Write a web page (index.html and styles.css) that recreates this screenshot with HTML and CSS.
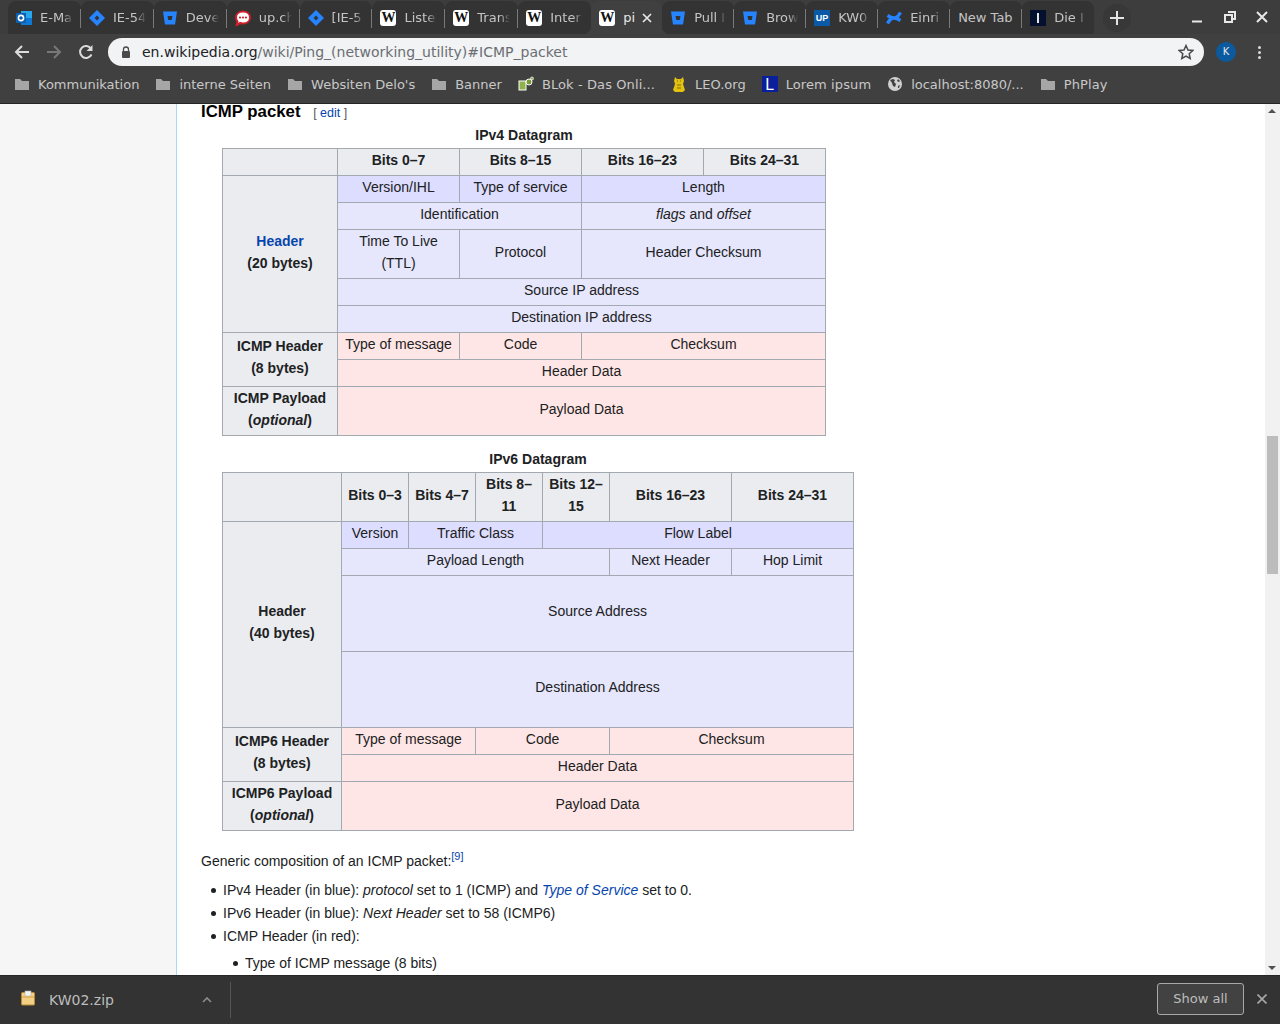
FILE: index.html
```html
<!DOCTYPE html>
<html lang="en">
<head>
  <meta charset="UTF-8" />
  <title>Ping (networking utility) - Wikipedia</title>
  <link rel="stylesheet" href="styles.css">
</head>
<body>

<!-- Tab strip -->
<div class="tabstrip">
  <div class="tab">
    <svg class="fav" viewBox="0 0 16 16"><rect x="5" y="1" width="11" height="14" fill="#28a8ea"/><rect x="5" y="8" width="11" height="7" fill="#0f78d4"/><rect x="0" y="3" width="10" height="10" fill="#0a5fb0"/><circle cx="5" cy="8" r="2.6" fill="none" stroke="#fff" stroke-width="1.6"/></svg>
    <span class="tab-title">E-Ma</span>
  </div>
  <div class="tab">
    <svg class="fav" viewBox="0 0 16 16"><path d="M8 0l8 8-8 8-8-8z" fill="#2684ff"/><path d="M8 5.600L10.400 8 8 10.400 5.600 8z" fill="#333"/></svg>
    <span class="tab-title">IE-54</span>
  </div>
  <div class="tab">
    <svg class="fav" viewBox="0 0 16 16"><path d="M1 1.500h14l-2 13H3z" fill="#2684ff"/><path d="M5.500 6h5l-.7 4H6.200z" fill="#333"/></svg>
    <span class="tab-title">Deve</span>
  </div>
  <div class="tab">
    <svg class="fav" viewBox="0 0 16 16"><path d="M1 7.500c0-3.500 3-6 7-6s7 2.500 7 6-3 6-7 6c-1 0-2 0-3-.5L1.500 15.500l1-4C1.500 10.500 1 9 1 7.500z" fill="#fff" stroke="#d01f2a" stroke-width="2"/><circle cx="5" cy="7.500" r="1.100" fill="#d01f2a"/><circle cx="8" cy="7.500" r="1.100" fill="#d01f2a"/><circle cx="11" cy="7.500" r="1.100" fill="#d01f2a"/></svg>
    <span class="tab-title">up.ch</span>
  </div>
  <div class="tab">
    <svg class="fav" viewBox="0 0 16 16"><path d="M8 0l8 8-8 8-8-8z" fill="#2684ff"/><path d="M8 5.600L10.400 8 8 10.400 5.600 8z" fill="#333"/></svg>
    <span class="tab-title">[IE-5</span>
  </div>
  <div class="tab">
    <span class="fav fav-w">W</span>
    <span class="tab-title">Liste</span>
  </div>
  <div class="tab">
    <span class="fav fav-w">W</span>
    <span class="tab-title">Trans</span>
  </div>
  <div class="tab tab-before-active">
    <span class="fav fav-w">W</span>
    <span class="tab-title">Inter</span>
  </div>
  <div class="tab tab-active">
    <span class="fav fav-w">W</span>
    <span class="tab-title">pi</span>
    <svg class="tab-close" viewBox="0 0 10 10"><path d="M1 1l8 8M9 1L1 9" stroke="#e8e8e8" stroke-width="1.700"/></svg>
  </div>
  <div class="tab">
    <svg class="fav" viewBox="0 0 16 16"><path d="M1 1.500h14l-2 13H3z" fill="#2684ff"/><path d="M5.500 6h5l-.7 4H6.200z" fill="#333"/></svg>
    <span class="tab-title">Pull I</span>
  </div>
  <div class="tab">
    <svg class="fav" viewBox="0 0 16 16"><path d="M1 1.500h14l-2 13H3z" fill="#2684ff"/><path d="M5.500 6h5l-.7 4H6.200z" fill="#333"/></svg>
    <span class="tab-title">Brow</span>
  </div>
  <div class="tab">
    <span class="fav fav-up">UP</span>
    <span class="tab-title">KW0</span>
  </div>
  <div class="tab">
    <svg class="fav" viewBox="0 0 16 16"><path d="M1.500 13.500C4 9 6.500 5.500 14.500 10.500M14.500 2.500C12 7 9.500 10.500 1.500 5.500" fill="none" stroke="#2684ff" stroke-width="3.400"/></svg>
    <span class="tab-title">Einri</span>
  </div>
  <div class="tab tab-plain">
    <span class="tab-title">New Tab</span>
  </div>
  <div class="tab tab-last">
    <span class="fav fav-i"><span class="fav-i-bar"></span></span>
    <span class="tab-title">Die I</span>
  </div>
  <div class="newtab">
    <svg viewBox="0 0 14 14" width="14" height="14"><path d="M7 0v14M0 7h14" stroke="#e4e4e4" stroke-width="2"/></svg>
  </div>
  <div class="winctl">
    <svg viewBox="0 0 12 12" width="12" height="12"><path d="M1 10.500h10" stroke="#e8e8e8" stroke-width="2"/></svg>
    <svg viewBox="0 0 12 12" width="12" height="12"><path d="M4 1h7v7H8.500M1 4h7v7H1z" fill="none" stroke="#e8e8e8" stroke-width="2"/></svg>
    <svg viewBox="0 0 12 12" width="12" height="12"><path d="M1 1l10 10M11 1L1 11" stroke="#e8e8e8" stroke-width="2"/></svg>
  </div>
</div>

<!-- Address bar -->
<div class="toolbar">
  <svg class="nav-icon" viewBox="0 0 16 16"><path d="M15 8H2M8 2L2 8l6 6" fill="none" stroke="#dcdcdc" stroke-width="2"/></svg>
  <svg class="nav-icon" viewBox="0 0 16 16"><path d="M1 8h13M8 2l6 6-6 6" fill="none" stroke="#787878" stroke-width="2"/></svg>
  <svg class="nav-icon" viewBox="0 0 16 16"><path d="M13.500 10.500A6 6 0 1 1 13 4.500" fill="none" stroke="#dcdcdc" stroke-width="2"/><path d="M14.500 1v6h-6z" fill="#dcdcdc"/></svg>
  <div class="omnibox">
    <svg class="lock" viewBox="0 0 10 12" width="10" height="12"><path d="M2.500 5V3.500a2.500 2.500 0 0 1 5 0V5" fill="none" stroke="#4a4a4a" stroke-width="1.300"/><rect x="1" y="5" width="8" height="7" rx="1" fill="#4a4a4a"/></svg>
    <span class="url"><span class="url-host">en.wikipedia.org</span>/wiki/Ping_(networking_utility)#ICMP_packet</span>
    <svg class="star" viewBox="0 0 16 16" width="16" height="16"><path d="M8 1.500l2 4.500 4.800.5-3.600 3.200 1 4.800L8 12l-4.200 2.500 1-4.800L1.200 6.500 6 6z" fill="none" stroke="#4a4a4a" stroke-width="1.500"/></svg>
  </div>
  <div class="avatar">K</div>
  <div class="menu-dots"><span></span><span></span><span></span></div>
</div>

<!-- Bookmarks -->
<div class="bookmarks">
  <div class="bm"><svg class="bm-icon" viewBox="0 0 16 16"><path d="M1 3h5l2 2h7v9H1z" fill="#a6a6a6"/></svg>Kommunikation</div>
  <div class="bm"><svg class="bm-icon" viewBox="0 0 16 16"><path d="M1 3h5l2 2h7v9H1z" fill="#a6a6a6"/></svg>interne Seiten</div>
  <div class="bm"><svg class="bm-icon" viewBox="0 0 16 16"><path d="M1 3h5l2 2h7v9H1z" fill="#a6a6a6"/></svg>Websiten Delo's</div>
  <div class="bm"><svg class="bm-icon" viewBox="0 0 16 16"><path d="M1 3h5l2 2h7v9H1z" fill="#a6a6a6"/></svg>Banner</div>
  <div class="bm bm-wide"><svg class="bm-icon" viewBox="0 0 16 16"><rect x="1" y="5" width="7" height="9" fill="#8fb34a" stroke="#fff"/><circle cx="11" cy="6" r="3" fill="#7a9a3a" stroke="#fff"/><circle cx="14" cy="2.500" r="1.500" fill="#8fb34a" stroke="#fff" stroke-width=".7"/></svg>BLok - Das Onli...</div>
  <div class="bm"><svg class="bm-icon" viewBox="0 0 16 16"><path d="M4 1l2 2h4l2-2 1 4-1 3 2 6-2 2H4l-2-2 2-6-1-3z" fill="#e3c20f"/><path d="M6 5h1M9 5h1M6 9h4M6 12h4" stroke="#7d6a08"/></svg>LEO.org</div>
  <div class="bm bm-wide"><span class="bm-icon bm-l">L</span>Lorem ipsum</div>
  <div class="bm"><svg class="bm-icon" viewBox="0 0 16 16"><circle cx="8" cy="8" r="7" fill="#d0d0d0"/><path d="M3 4l3-1 2 1-1 2 2 2-1 3-2-1-1-3zM11 3l2 2-1 1-2-1zM11 10l2-1-1 3-1 0z" fill="#3f3f3f"/></svg>localhost:8080/...</div>
  <div class="bm bm-wide"><svg class="bm-icon" viewBox="0 0 16 16"><path d="M1 3h5l2 2h7v9H1z" fill="#a6a6a6"/></svg>PhPlay</div>
</div>

<!-- Page -->
<div class="viewport">
  <div class="sidebar"></div>
  <div class="content">
    <h3 class="section-title">ICMP packet <span class="editsection">[ <a href="#">edit</a> ]</span></h3>

    <table class="wikitable v4-table">
      <caption>IPv4 Datagram</caption>
      <colgroup>
        <col class="col-label-v4"><col class="col-byte"><col class="col-byte"><col class="col-byte"><col class="col-byte">
      </colgroup>
      <tr><th></th><th>Bits 0–7</th><th>Bits 8–15</th><th>Bits 16–23</th><th>Bits 24–31</th></tr>
      <tr><th rowspan="5"><a href="#">Header</a><br>(20 bytes)</th><td class="ip-first">Version/IHL</td><td class="ip-first">Type of service</td><td class="ip-first" colspan="2">Length</td></tr>
      <tr><td class="ip" colspan="2">Identification</td><td class="ip" colspan="2"><i>flags</i> and <i>offset</i></td></tr>
      <tr><td class="ip">Time To Live<br>(TTL)</td><td class="ip">Protocol</td><td class="ip" colspan="2">Header Checksum</td></tr>
      <tr><td class="ip" colspan="4">Source IP address</td></tr>
      <tr><td class="ip" colspan="4">Destination IP address</td></tr>
      <tr><th class="label-up" rowspan="2">ICMP Header<br>(8 bytes)</th><td class="icmp">Type of message</td><td class="icmp">Code</td><td class="icmp" colspan="2">Checksum</td></tr>
      <tr><td class="icmp" colspan="4">Header Data</td></tr>
      <tr><th>ICMP Payload<br>(<i>optional</i>)</th><td class="icmp" colspan="4">Payload Data</td></tr>
    </table>

    <table class="wikitable v6-table">
      <caption>IPv6 Datagram</caption>
      <colgroup>
        <col class="col-label-v6"><col class="col-nibble"><col class="col-nibble"><col class="col-nibble"><col class="col-nibble"><col class="col-byte"><col class="col-byte">
      </colgroup>
      <tr><th></th><th>Bits 0–3</th><th>Bits 4–7</th><th>Bits 8–<br>11</th><th>Bits 12–<br>15</th><th>Bits 16–23</th><th>Bits 24–31</th></tr>
      <tr><th class="label-up" rowspan="4">Header<br>(40 bytes)</th><td class="ip-first">Version</td><td class="ip-first" colspan="2">Traffic Class</td><td class="ip-first" colspan="3">Flow Label</td></tr>
      <tr><td class="ip" colspan="4">Payload Length</td><td class="ip">Next Header</td><td class="ip">Hop Limit</td></tr>
      <tr><td class="ip addr" colspan="6">Source Address</td></tr>
      <tr><td class="ip addr" colspan="6">Destination Address</td></tr>
      <tr><th class="label-up" rowspan="2">ICMP6 Header<br>(8 bytes)</th><td class="icmp" colspan="2">Type of message</td><td class="icmp" colspan="2">Code</td><td class="icmp" colspan="2">Checksum</td></tr>
      <tr><td class="icmp" colspan="6">Header Data</td></tr>
      <tr><th>ICMP6 Payload<br>(<i>optional</i>)</th><td class="icmp" colspan="6">Payload Data</td></tr>
    </table>

    <p class="intro">Generic composition of an ICMP packet:<sup><a href="#">[9]</a></sup></p>
    <ul class="fields">
      <li>IPv4 Header (in blue): <i>protocol</i> set to 1 (ICMP) and <i><a href="#">Type of Service</a></i> set to 0.</li>
      <li>IPv6 Header (in blue): <i>Next Header</i> set to 58 (ICMP6)</li>
      <li>ICMP Header (in red):
        <ul>
          <li>Type of ICMP message (8 bits)</li>
        </ul>
      </li>
    </ul>
  </div>
  <div class="scrollbar">
    <div class="scroll-arrow scroll-up"></div>
    <div class="scroll-thumb"></div>
    <div class="scroll-arrow scroll-down"></div>
  </div>
</div>

<!-- Downloads -->
<div class="downloads">
  <svg class="zip-icon" viewBox="0 0 16 16" width="16" height="16"><rect x="1.500" y="2.500" width="13" height="12.500" rx="1" fill="#f2cf85" stroke="#b98a35"/><rect x="5" y="1" width="6" height="5" fill="#f4f4f4" stroke="#b0b0b0" stroke-width=".6"/><rect x="2" y="6" width="12" height="2" fill="#e2b765"/></svg>
  <span class="dl-name">KW02.zip</span>
  <svg class="dl-chevron" viewBox="0 0 10 6" width="10" height="6"><path d="M1 5l4-4 4 4" fill="none" stroke="#8c8c8c" stroke-width="1.600"/></svg>
  <div class="dl-sep"></div>
  <div class="dl-spacer"></div>
  <div class="show-all">Show all</div>
  <svg class="dl-close" viewBox="0 0 10 10" width="10" height="10"><path d="M0.500 0.500l9 9M9.500 0.500l-9 9" stroke="#a8a8a8" stroke-width="1.600"/></svg>
</div>

</body>
</html>
```

FILE: styles.css
```css
html, body {
  margin: 0;
  height: 100%;
  overflow: hidden;
}

body {
  display: flex;
  flex-direction: column;
  height: 1024px;
  font-family: 'Liberation Sans', Arial, sans-serif;
  font-size: 14px;
  color: #202122;
  background: #fff;
}

/* ---- browser chrome ---- */

.tabstrip {
  display: flex;
  align-items: flex-end;
  height: 34px;
  flex-shrink: 0;
  padding-left: 8px;
  background: #3d3d3d;
  font-family: 'DejaVu Sans', sans-serif;
  font-size: 13px;
  color: #c4c4c4;
}

.tab {
  position: relative;
  display: flex;
  align-items: center;
  flex-shrink: 0;
  box-sizing: border-box;
  width: 72.9px;
  height: 33px;
  padding: 0 8px;
  background: #333;
  border-radius: 8px 8px 0 0;
}

/* the thin divider between tabs */
.tab::after {
  content: "";
  position: absolute;
  right: 0;
  top: 8px;
  height: 19px;
  width: 1px;
  background: #7a7a7a;
}

.tab-before-active::after,
.tab-active::after,
.tab-last::after {
  display: none;
}

.tab-active {
  width: 71px;
  background: #404040;
  color: #e8e8e8;
}

.tab-active ~ .tab {
  width: 72px;
}

.tab-active::before {
  content: "";
  position: absolute;
  left: -8px;
  bottom: 0;
  width: 8px;
  height: 8px;
  background: radial-gradient(circle at 0 0, transparent 8px, #404040 8.500px);
}

.tab-active + .tab::before {
  content: "";
  position: absolute;
  left: 0;
  bottom: 0;
  width: 8px;
  height: 8px;
  background: radial-gradient(circle at 100% 0, transparent 8px, #404040 8.500px);
}

.fav {
  display: block;
  flex-shrink: 0;
  width: 16px;
  height: 16px;
  margin-right: 8px;
}

.fav-w {
  background: #fff;
  border-radius: 3px;
  color: #111;
  font-family: 'Liberation Serif', serif;
  font-size: 14px;
  font-weight: bold;
  line-height: 16px;
  text-align: center;
  overflow: hidden;
}

.fav-up {
  background: #0a5aa8;
  color: #fff;
  font-family: 'Liberation Sans', sans-serif;
  font-size: 9px;
  font-weight: bold;
  line-height: 16px;
  text-align: center;
}

.fav-i {
  display: flex;
  justify-content: center;
  align-items: center;
  background: #03112e;
}

.fav-i-bar {
  width: 2px;
  height: 10px;
  background: #e8e8e8;
}

.tab-title {
  flex: 1;
  min-width: 0;
  overflow: hidden;
  white-space: nowrap;
  line-height: 20px;
  -webkit-mask-image: linear-gradient(to right, #000 70%, transparent 100%);
  mask-image: linear-gradient(to right, #000 70%, transparent 100%);
}

.tab-active .tab-title,
.tab-plain .tab-title {
  -webkit-mask-image: none;
  mask-image: none;
}

.tab-close {
  width: 10px;
  height: 10px;
  margin-right: 2px;
  flex-shrink: 0;
}

.newtab {
  display: flex;
  align-items: center;
  justify-content: center;
  width: 28px;
  height: 28px;
  margin: 0 0 2px 9px;
  border-radius: 50%;
  background: #383838;
}

.winctl {
  display: flex;
  align-items: center;
  gap: 20.500px;
  margin-left: auto;
  padding-right: 12px;
  height: 34px;
}

.toolbar {
  display: flex;
  align-items: center;
  box-sizing: border-box;
  height: 34px;
  flex-shrink: 0;
  background: #404040;
  padding: 2px 0 0 14px;
}

.nav-icon {
  width: 16px;
  height: 16px;
  margin-right: 16px;
}

.omnibox {
  display: flex;
  align-items: center;
  box-sizing: border-box;
  width: 1096px;
  height: 28px;
  margin-left: -2px;
  padding: 0 10px 0 13px;
  background: #f1f3f4;
  border-radius: 14px;
  font-family: 'DejaVu Sans', sans-serif;
  font-size: 14px;
  color: #6b6e72;
}

.lock {
  margin-right: 11px;
}

.url {
  flex: 1;
  white-space: nowrap;
}

.url-host {
  color: #202124;
}

.avatar {
  width: 20px;
  height: 20px;
  margin-left: 12px;
  border-radius: 50%;
  background: #0b5aa0;
  color: #e8e8e8;
  font-family: 'DejaVu Sans', sans-serif;
  font-size: 10px;
  line-height: 20px;
  text-align: center;
}

.menu-dots {
  display: flex;
  flex-direction: column;
  gap: 2px;
  margin-left: 22px;
}

.menu-dots span {
  width: 3px;
  height: 3px;
  border-radius: 50%;
  background: #dcdcdc;
}

.bookmarks {
  display: flex;
  align-items: center;
  gap: 16px;
  box-sizing: border-box;
  height: 36px;
  flex-shrink: 0;
  padding: 0 0 3px 14px;
  background: #404040;
  border-bottom: 1px solid #262626;
  font-family: 'DejaVu Sans', sans-serif;
  font-size: 13px;
  color: #c8c8c8;
}

.bm {
  display: flex;
  align-items: center;
  gap: 8px;
  white-space: nowrap;
}

.bm-wide {
  letter-spacing: 0.1px;
}

.bm-icon {
  display: block;
  width: 16px;
  height: 16px;
  flex-shrink: 0;
}

.bm-l {
  background: #0a1f9c;
  color: #fff;
  font-family: 'Liberation Sans', sans-serif;
  font-size: 16px;
  line-height: 17px;
  text-align: center;
}

/* ---- wiki page ---- */

.viewport {
  display: flex;
  flex: 1;
  min-height: 0;
}

.sidebar {
  width: 176px;
  flex-shrink: 0;
  background: #f6f6f6;
  border-right: 1px solid #a7d7f9;
}

.content {
  flex: 1;
  min-width: 0;
  overflow: hidden;
  padding: 0 0 0 24px;
  background: #fff;
  line-height: 22px;
}

.section-title {
  margin: 0 0 2px;
  font-size: 16.800px;
  font-weight: bold;
  line-height: 16px;
  color: #000;
}

.editsection {
  margin-left: 8px;
  font-size: 12.500px;
  font-weight: normal;
  color: #54595d;
}

a {
  color: #0645ad;
  text-decoration: none;
}

.wikitable {
  border-collapse: collapse;
  table-layout: fixed;
  margin-left: 21px;
  color: #202122;
}

.v4-table {
  width: 604px;
}

.v6-table {
  width: 632px;
  margin-top: 9px;
}

.wikitable caption {
  padding-top: 1px;
  padding-bottom: 2px;
  font-weight: bold;
  line-height: 22px;
}

.v6-table caption {
  padding-top: 3px;
}

.col-label-v4 { width: 115px; }
.col-label-v6 { width: 119px; }
.col-byte { width: 122px; }
.col-nibble { width: 67px; }

.wikitable th,
.wikitable td {
  padding: 0 5px 4px;
  border: 1px solid #a2a9b1;
  text-align: center;
}

.wikitable th {
  background: #eaecf0;
}

.wikitable .label-up {
  padding-bottom: 6px;
}

.ip-first {
  background: #ddf;
}

.ip {
  background: #e6e6fc;
}

.icmp {
  background: #ffe6e6;
}

.wikitable .addr {
  height: 69px;
  padding-bottom: 6px;
}

.intro {
  margin: 19px 0 0;
}

.intro sup {
  font-size: 11px;
  line-height: 1;
}

.fields {
  margin: 7px 0 0 22px;
  padding: 0;
  list-style: none;
}

.fields li {
  position: relative;
  margin-bottom: 1px;
}

/* round bullet, a bit bigger than the default disc */
.fields li::before {
  content: "";
  position: absolute;
  left: -12px;
  top: 9px;
  width: 5px;
  height: 5px;
  border-radius: 50%;
  background: #202122;
}

.fields ul {
  margin: 5px 0 0 22px;
  padding: 0;
  list-style: none;
}

/* ---- page scrollbar ---- */

.scrollbar {
  position: relative;
  width: 15px;
  flex-shrink: 0;
  background: #f1f1f1;
}

.scroll-thumb {
  width: 11px;
  height: 138px;
  margin: 332px 0 0 2px;
  background: #bcbcbc;
}

.scroll-arrow {
  position: absolute;
  left: 3px;
  width: 0;
  height: 0;
  border-left: 4px solid transparent;
  border-right: 4px solid transparent;
}

.scroll-up {
  top: 5px;
  border-bottom: 4px solid #505050;
}

.scroll-down {
  bottom: 5px;
  border-top: 4px solid #505050;
}

/* ---- download shelf ---- */

.downloads {
  display: flex;
  align-items: center;
  box-sizing: border-box;
  height: 49px;
  flex-shrink: 0;
  padding: 0 13px 0 20px;
  background: #333;
  border-top: 1px solid #262626;
  font-family: 'DejaVu Sans', sans-serif;
  font-size: 14px;
  color: #bdbdbd;
}

.zip-icon {
  margin-top: -4px;
}

.dl-name {
  margin-left: 13px;
}

.dl-chevron {
  margin-left: 88px;
}

.dl-sep {
  width: 1px;
  height: 36px;
  margin-left: 18px;
  background: #555;
}

.dl-spacer {
  flex: 1;
}

.show-all {
  box-sizing: border-box;
  width: 87px;
  height: 32px;
  margin-top: -2px;
  border: 1px solid #a8a8a8;
  border-radius: 3px;
  background: #424242;
  font-size: 13px;
  line-height: 29px;
  text-align: center;
  color: #bdbdbd;
}

.dl-close {
  margin: -2px 0 0 13px;
}
```
